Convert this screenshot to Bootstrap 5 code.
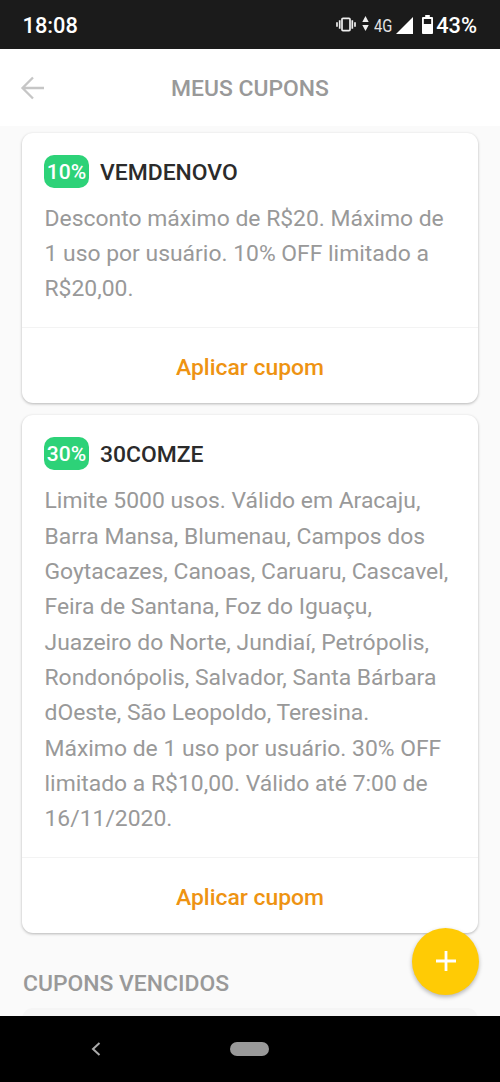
<!DOCTYPE html>
<html lang="pt-BR">
<head>
<meta charset="utf-8">
<meta name="viewport" content="width=device-width, initial-scale=1">
<title>Meus cupons</title>
<link href="https://cdn.jsdelivr.net/npm/bootstrap@5.3.0/dist/css/bootstrap.min.css" rel="stylesheet">
<style>
body{font-family:Roboto,"Liberation Sans",sans-serif;background:#fafafa;font-size:22.9px;color:#999}
.screen{height:1082px}
.status{height:48.5px;background:#1b1b1b;color:#fff;padding:3px 23px 0 22.5px}
.clock{font-size:21.8px;font-weight:500;padding-top:1px}
.net{font-size:18px;color:#e4e4e4;display:inline-block;width:19px;transform:scaleX(.82);transform-origin:0 50%}
.topbar{height:77.5px;padding:2px 20px 0}
.title{font-weight:500;line-height:1;padding-top:3px;margin-right:25px}
.content{padding:6.5px 22px 0}
.coupon{border:0;border-radius:11px;box-shadow:0 1px 3px rgba(0,0,0,.28);margin-bottom:11.5px}
.coupon .card-body{padding:22px 22px 20px 22.5px}
.pct{width:45px;height:33.5px;margin-left:-.5px;padding-top:2px;border-radius:10px;background:#2dd278;color:#fff;font-weight:500;font-size:21px}
.code{color:#2b2b2b;font-weight:500;line-height:1;margin-left:11px;padding-top:4px}
.desc{line-height:35.36px;margin:12.7px -10px 0 0}
.coupon .card-footer{height:76.7px;background:none;border-top:1.4px solid #f3f3f3;padding:5px 0 0}
.apply{font-size:22.9px;font-weight:500;color:#ee9312;line-height:1;padding:0;border:0}
.section-title{font-size:22.9px;font-weight:500;line-height:1;margin:39.5px 0 0 1px}
.expired{height:40px;background:#f5f5f5;border-radius:11px;margin-top:12px}
.fab{right:21px;bottom:21px;width:67px;height:67px;background:#ffcb05;box-shadow:0 2px 4px rgba(0,0,0,.28)}
.navkeys{height:66.5px;background:#000}
.pill{width:39px;height:14px;background:#999}
.navkeys svg{margin-left:91px;margin-right:129px}
</style>
</head>
<body>
<div class="screen d-flex flex-column overflow-hidden">
  <div class="status d-flex align-items-center justify-content-between flex-shrink-0">
    <span class="clock">18:08</span>
    <div class="d-flex align-items-center">
      <svg width="20" height="15" viewBox="0 0 20 16" preserveAspectRatio="none" fill="none" stroke="#eee" stroke-width="1.7" style="margin-top:-2px"><rect x="6" y="1.500" width="8" height="13" rx="1"/><path d="M3.700 3.500v9M1 5.500v5M16.300 3.500v9M19 5.500v5"/></svg>
      <svg width="7" height="16" viewBox="0 0 7 16" fill="#eee" style="margin-left:6px;margin-top:-3px"><path d="M3.500 0 6.700 6H.3zM3.500 15 .3 9h6.400z"/></svg>
      <span class="net" style="margin-left:5.5px">4G</span>
      <svg width="17" height="17" viewBox="0 0 17 17" fill="#fff" style="margin-left:2.5px;margin-top:-1px"><path d="M17 0v17H0z"/></svg>
      <svg width="11" height="19" viewBox="0 0 12 19" preserveAspectRatio="none" style="margin-left:9.5px;margin-right:3px;margin-top:-2px"><path fill="#fff" fill-rule="evenodd" d="M3.500 0h5v2H11a1 1 0 0 1 1 1v15a1 1 0 0 1-1 1H1a1 1 0 0 1-1-1V3a1 1 0 0 1 1-1h2.500zM2 4v5h8V4z"/></svg>
      <span class="clock">43%</span>
    </div>
  </div>
  <header class="topbar bg-white d-flex align-items-center flex-shrink-0">
    <svg width="25" height="24" viewBox="0 0 25 24" fill="none" stroke="#c6c6c6" stroke-width="2.300"><path d="M24 12H2.500M13 1.500 2.500 12 13 22.500"/></svg>
    <div class="title flex-grow-1 text-center">MEUS CUPONS</div>
  </header>
  <main class="content position-relative flex-grow-1 overflow-hidden">
    <div class="card coupon">
      <div class="card-body">
        <div class="d-flex align-items-center"><span class="pct d-flex align-items-center justify-content-center">10%</span><span class="code">VEMDENOVO</span></div>
        <p class="desc">Desconto máximo de R$20. Máximo de<br>1 uso por usuário. 10% OFF limitado a<br>R$20,00.</p>
      </div>
      <div class="card-footer d-flex align-items-center justify-content-center"><button class="btn apply">Aplicar cupom</button></div>
    </div>
    <div class="card coupon">
      <div class="card-body">
        <div class="d-flex align-items-center"><span class="pct d-flex align-items-center justify-content-center">30%</span><span class="code">30COMZE</span></div>
        <p class="desc">Limite 5000 usos. Válido em Aracaju,<br>Barra Mansa, Blumenau, Campos dos<br>Goytacazes, Canoas, Caruaru, Cascavel,<br>Feira de Santana, Foz do Iguaçu,<br>Juazeiro do Norte, Jundiaí, Petrópolis,<br>Rondonópolis, Salvador, Santa Bárbara<br>dOeste, São Leopoldo, Teresina.<br>Máximo de 1 uso por usuário. 30% OFF<br>limitado a R$10,00. Válido até 7:00 de<br>16/11/2020.</p>
      </div>
      <div class="card-footer d-flex align-items-center justify-content-center"><button class="btn apply">Aplicar cupom</button></div>
    </div>
    <h2 class="section-title">CUPONS VENCIDOS</h2>
    <div class="expired"></div>
    <button class="fab btn rounded-circle border-0 p-0 position-absolute d-flex align-items-center justify-content-center" aria-label="Adicionar">
      <svg width="20" height="20" viewBox="0 0 20 20" stroke="#fff" stroke-width="2.800"><path d="M10 0v20M0 10h20"/></svg>
    </button>
  </main>
  <nav class="navkeys d-flex align-items-center flex-shrink-0">
    <svg width="10" height="14" viewBox="0 0 10 14" fill="none" stroke="#aaa" stroke-width="2"><path d="M8.500 1 2 7l6.500 6"/></svg>
    <span class="pill rounded-pill"></span>
  </nav>
</div>
<script src="https://cdn.jsdelivr.net/npm/bootstrap@5.3.0/dist/js/bootstrap.bundle.min.js"></script>
</body>
</html>
